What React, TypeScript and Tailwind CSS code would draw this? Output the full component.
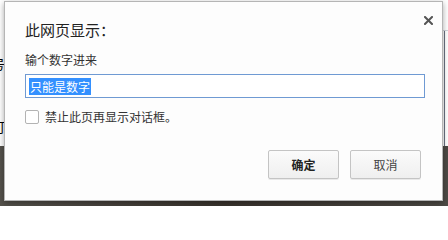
export default function App() {
    return (
        <div className="relative w-[448px] h-[206px] overflow-hidden bg-white font-['Noto_Sans_CJK_SC','Microsoft_YaHei',sans-serif]">
            {/* page behind the dialog */}
            <div className="flex h-full flex-col">
                <div className="relative h-[146px] bg-white">
                    <span className="absolute left-[-8px] top-[57px] text-[13px] leading-none text-black">号</span>
                    <span className="absolute left-[-8px] top-[120px] text-[13px] leading-none text-black">可</span>
                    <div className="absolute right-[3px] top-[30px] h-[116px] w-px bg-gray-500" />
                    <div className="absolute right-0 top-[30px] h-px w-[5px] bg-gray-300" />
                </div>
                <div className="flex-1 bg-gradient-to-r from-[#55524c] via-[#3a342e] to-[#4d4a45]" />
            </div>

            {/* dialog */}
            <div className="absolute left-[4px] top-[1px] flex h-[200px] w-[439px] flex-col border border-[#b5b5b5] bg-[#fdfdfd] px-[20px] shadow-[0_2px_6px_rgba(0,0,0,0.35)]">
                <button className="absolute right-[9px] top-[13px] flex h-[10px] w-[10px] items-center justify-center">
                    <svg width="9" height="9" viewBox="0 0 9 9">
                        <path d="M1 1L8 8M8 1L1 8" stroke="#555" strokeWidth="2" strokeLinecap="square" />
                    </svg>
                </button>
                <h1 className="mt-[18px] text-[15px] leading-[20px] text-[#222]">此网页显示：</h1>
                <p className="mt-[12px] text-[12px] leading-[16px] text-[#333]">输个数字进来</p>
                <div className="mt-[6px] flex h-[24px] w-[400px] items-center border border-[#6f9ad3] bg-white pl-[3px]">
                    <span className="bg-[#3390ff] px-px text-[12px] leading-[17px] text-white">只能是数字</span>
                </div>
                <label className="mt-[11px] flex items-center gap-[6px]">
                    <span className="h-[14px] w-[14px] rounded-[2px] border border-[#b3b3b3] bg-white" />
                    <span className="text-[12px] leading-[16px] text-[#333]">禁止此页再显示对话框。</span>
                </label>
                <div className="mt-[25px] flex justify-end gap-[11px] pr-[1px]">
                    <button className="h-[29px] w-[71px] rounded-[2px] border border-[#c4c4c4] bg-gradient-to-b from-[#fbfbfb] to-[#efefef] text-[12px] font-bold text-[#222] shadow-[0_1px_0_rgba(0,0,0,0.08)]">
                        确定
                    </button>
                    <button className="h-[29px] w-[71px] rounded-[2px] border border-[#c4c4c4] bg-gradient-to-b from-[#fbfbfb] to-[#efefef] text-[12px] text-[#444] shadow-[0_1px_0_rgba(0,0,0,0.08)]">
                        取消
                    </button>
                </div>
            </div>
        </div>
    );
}
